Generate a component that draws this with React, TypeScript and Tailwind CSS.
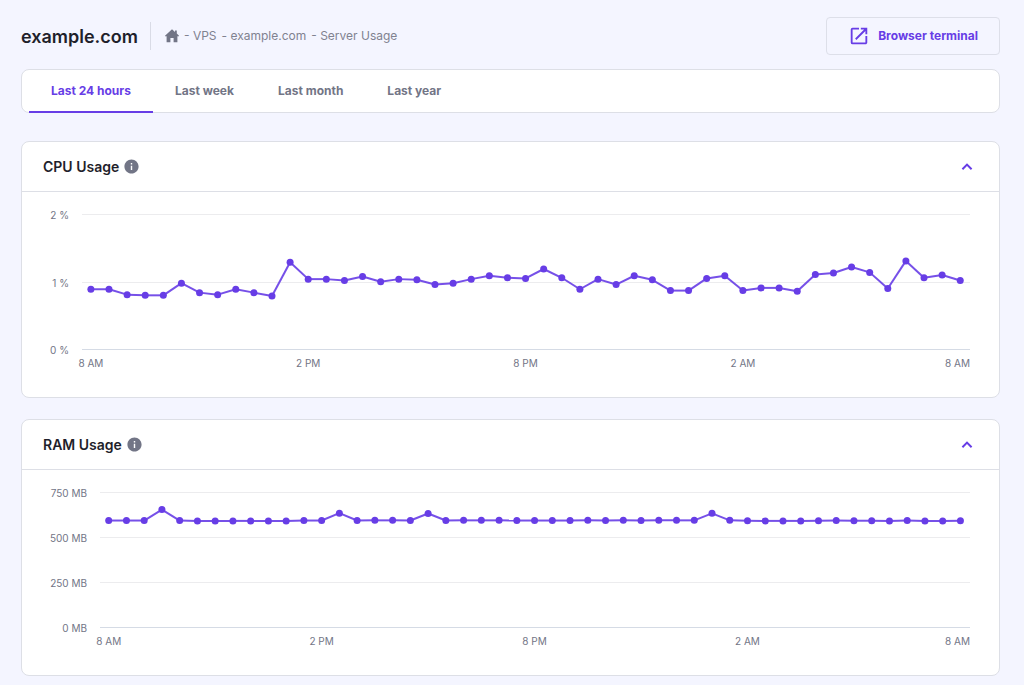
import { useState } from 'react'
import { MdInfo, MdOpenInNew } from 'react-icons/md'

const TABS = ['Last 24 hours', 'Last week', 'Last month', 'Last year']
const CRUMBS = ['VPS', 'example.com', 'Server Usage']
const TIMES = ['8 AM', '2 PM', '8 PM', '2 AM', '8 AM']

const CPU = [
  0.9, 0.9, 0.82, 0.81, 0.81, 0.99, 0.85, 0.82, 0.9, 0.85, 0.8, 1.3, 1.05, 1.05, 1.03, 1.09, 1.01,
  1.05, 1.04, 0.97, 0.99, 1.05, 1.1, 1.07, 1.06, 1.2, 1.07, 0.9, 1.05, 0.97, 1.1, 1.04, 0.88, 0.88,
  1.06, 1.1, 0.88, 0.92, 0.92, 0.87, 1.12, 1.14, 1.23, 1.15, 0.91, 1.32, 1.07, 1.11, 1.03,
]

const RAM = [
  597, 597, 597, 658, 597, 595, 594, 595, 595, 594, 595, 597, 597, 638, 597, 598, 598, 597, 636, 597,
  598, 598, 598, 597, 597, 597, 597, 598, 597, 598, 597, 599, 598, 598, 637, 598, 596, 595, 595, 595,
  596, 597, 596, 596, 595, 597, 595, 594, 596,
]

const TOP = 7
const PLOT = 135

function HomeIcon() {
  return (
    <svg width="14" height="14" viewBox="0 0 14 14" fill="currentColor" aria-hidden="true">
      <path d="M7 .3 10 3V1.6h1.8v3L14 6.7v.5h-1.6v6.1H8.6V9H5.4v4.3H1.6V7.2H0v-.5z" />
    </svg>
  )
}

function Chevron({ open }: { open: boolean }) {
  return (
    <svg width="20" height="20" viewBox="0 0 20 20" fill="none" stroke="currentColor" strokeWidth="2" aria-hidden="true">
      <path d={open ? 'M5.4 12.2 10 7.6l4.6 4.6' : 'M5.4 7.8 10 12.4l4.6-4.6'} />
    </svg>
  )
}

type ChartProps = { data: number[]; max: number; ticks: string[]; labelWidth: string }

function Chart({ data, max, ticks, labelWidth }: ChartProps) {
  const x = (i: number) => `${1 + (i / (data.length - 1)) * 97.9}%`
  const y = (v: number) => TOP + PLOT - (v / max) * PLOT

  return (
    <div className="flex gap-[13px] pt-4 pr-[29px] pb-7 pl-[29px]">
      <div
        className={`flex h-[149px] shrink-0 flex-col items-end justify-between text-[10px] leading-[14px] whitespace-nowrap text-[#727586] ${labelWidth}`}
      >
        {ticks.map((t) => (
          <span key={t}>{t}</span>
        ))}
      </div>
      <svg className="h-[161px] min-w-0 flex-1 overflow-visible">
        {ticks.map((t, i) => {
          const lineY = Math.round(TOP + (i / (ticks.length - 1)) * PLOT) - 0.5
          const last = i === ticks.length - 1
          return <line key={t} x1="0" x2="100%" y1={lineY} y2={lineY} stroke={last ? '#d5dbe5' : '#ececee'} />
        })}
        {data.slice(1).map((v, i) => (
          <line key={i} x1={x(i)} y1={y(data[i])} x2={x(i + 1)} y2={y(v)} stroke="#673de6" strokeWidth="2" strokeOpacity="0.9" />
        ))}
        {data.map((v, i) => (
          <circle key={i} cx={x(i)} cy={y(v)} r="3.5" fill="#673de6" />
        ))}
        {TIMES.map((t, i) => {
          const last = i === TIMES.length - 1
          return (
            <text
              key={i}
              x={last ? '100%' : x(i * 12)}
              y="159"
              textAnchor={last ? 'end' : 'middle'}
              className="fill-[#727586] text-[10px]"
            >
              {t}
            </text>
          )
        })}
      </svg>
    </div>
  )
}

function UsageCard({ title, ...chart }: ChartProps & { title: string }) {
  const [open, setOpen] = useState(true)

  return (
    <section className="rounded-lg border border-[#dddfe6] bg-white">
      <div className="flex h-[50px] items-center justify-between border-b border-[#dddfe6] pr-[22px] pl-[21px]">
        <div className="flex items-center gap-1">
          <h2 className="text-[14px] font-semibold text-[#1f1f2b]">{title}</h2>
          <MdInfo size={17} className="text-[#727586]" />
        </div>
        <button type="button" aria-label={`Toggle ${title}`} onClick={() => setOpen(!open)} className="text-[#673de6]">
          <Chevron open={open} />
        </button>
      </div>
      {open && <Chart {...chart} />}
    </section>
  )
}

export default function App() {
  const [tab, setTab] = useState(TABS[0])

  return (
    <main className="min-h-screen bg-[#f4f5ff] pt-[17px] pr-6 pb-2 pl-[21px] font-['Inter','Liberation_Sans',sans-serif]">
      <header className="flex items-center justify-between">
        <div className="flex items-center">
          <h1 className="text-[18px] font-semibold text-[#1f1f2b]">example.com</h1>
          <nav aria-label="Breadcrumb" className="ml-3 flex h-7 items-center gap-[5px] border-l border-[#d9dbe6] pl-[14px] text-[12px] text-[#808290]">
            <a href="#" aria-label="Home" className="text-[#727586]">
              <HomeIcon />
            </a>
            {CRUMBS.map((c) => (
              <span key={c}>
                - <a href="#">{c}</a>
              </span>
            ))}
          </nav>
        </div>
        <button
          type="button"
          className="flex h-[38px] items-center gap-2 rounded border border-[#dddfe9] px-[21px] text-[12px] font-bold text-[#673de6]"
        >
          <MdOpenInNew size={22} />
          Browser terminal
        </button>
      </header>

      <div className="mt-[14px] flex h-11 rounded-lg border border-[#dddfe6] bg-white px-[7px]">
        {TABS.map((t) => (
          <button
            key={t}
            type="button"
            onClick={() => setTab(t)}
            className={`-mb-px border-b-2 px-[22px] text-[12px] font-bold ${
              t === tab ? 'border-[#673de6] text-[#673de6]' : 'border-transparent text-[#727586]'
            }`}
          >
            {t}
          </button>
        ))}
      </div>

      <div className="mt-7 flex flex-col gap-[21px]">
        <UsageCard title="CPU Usage" data={CPU} max={2} ticks={['2 %', '1 %', '0 %']} labelWidth="w-[18px]" />
        <UsageCard
          title="RAM Usage"
          data={RAM}
          max={750}
          ticks={['750 MB', '500 MB', '250 MB', '0 MB']}
          labelWidth="w-9"
        />
      </div>
    </main>
  )
}
